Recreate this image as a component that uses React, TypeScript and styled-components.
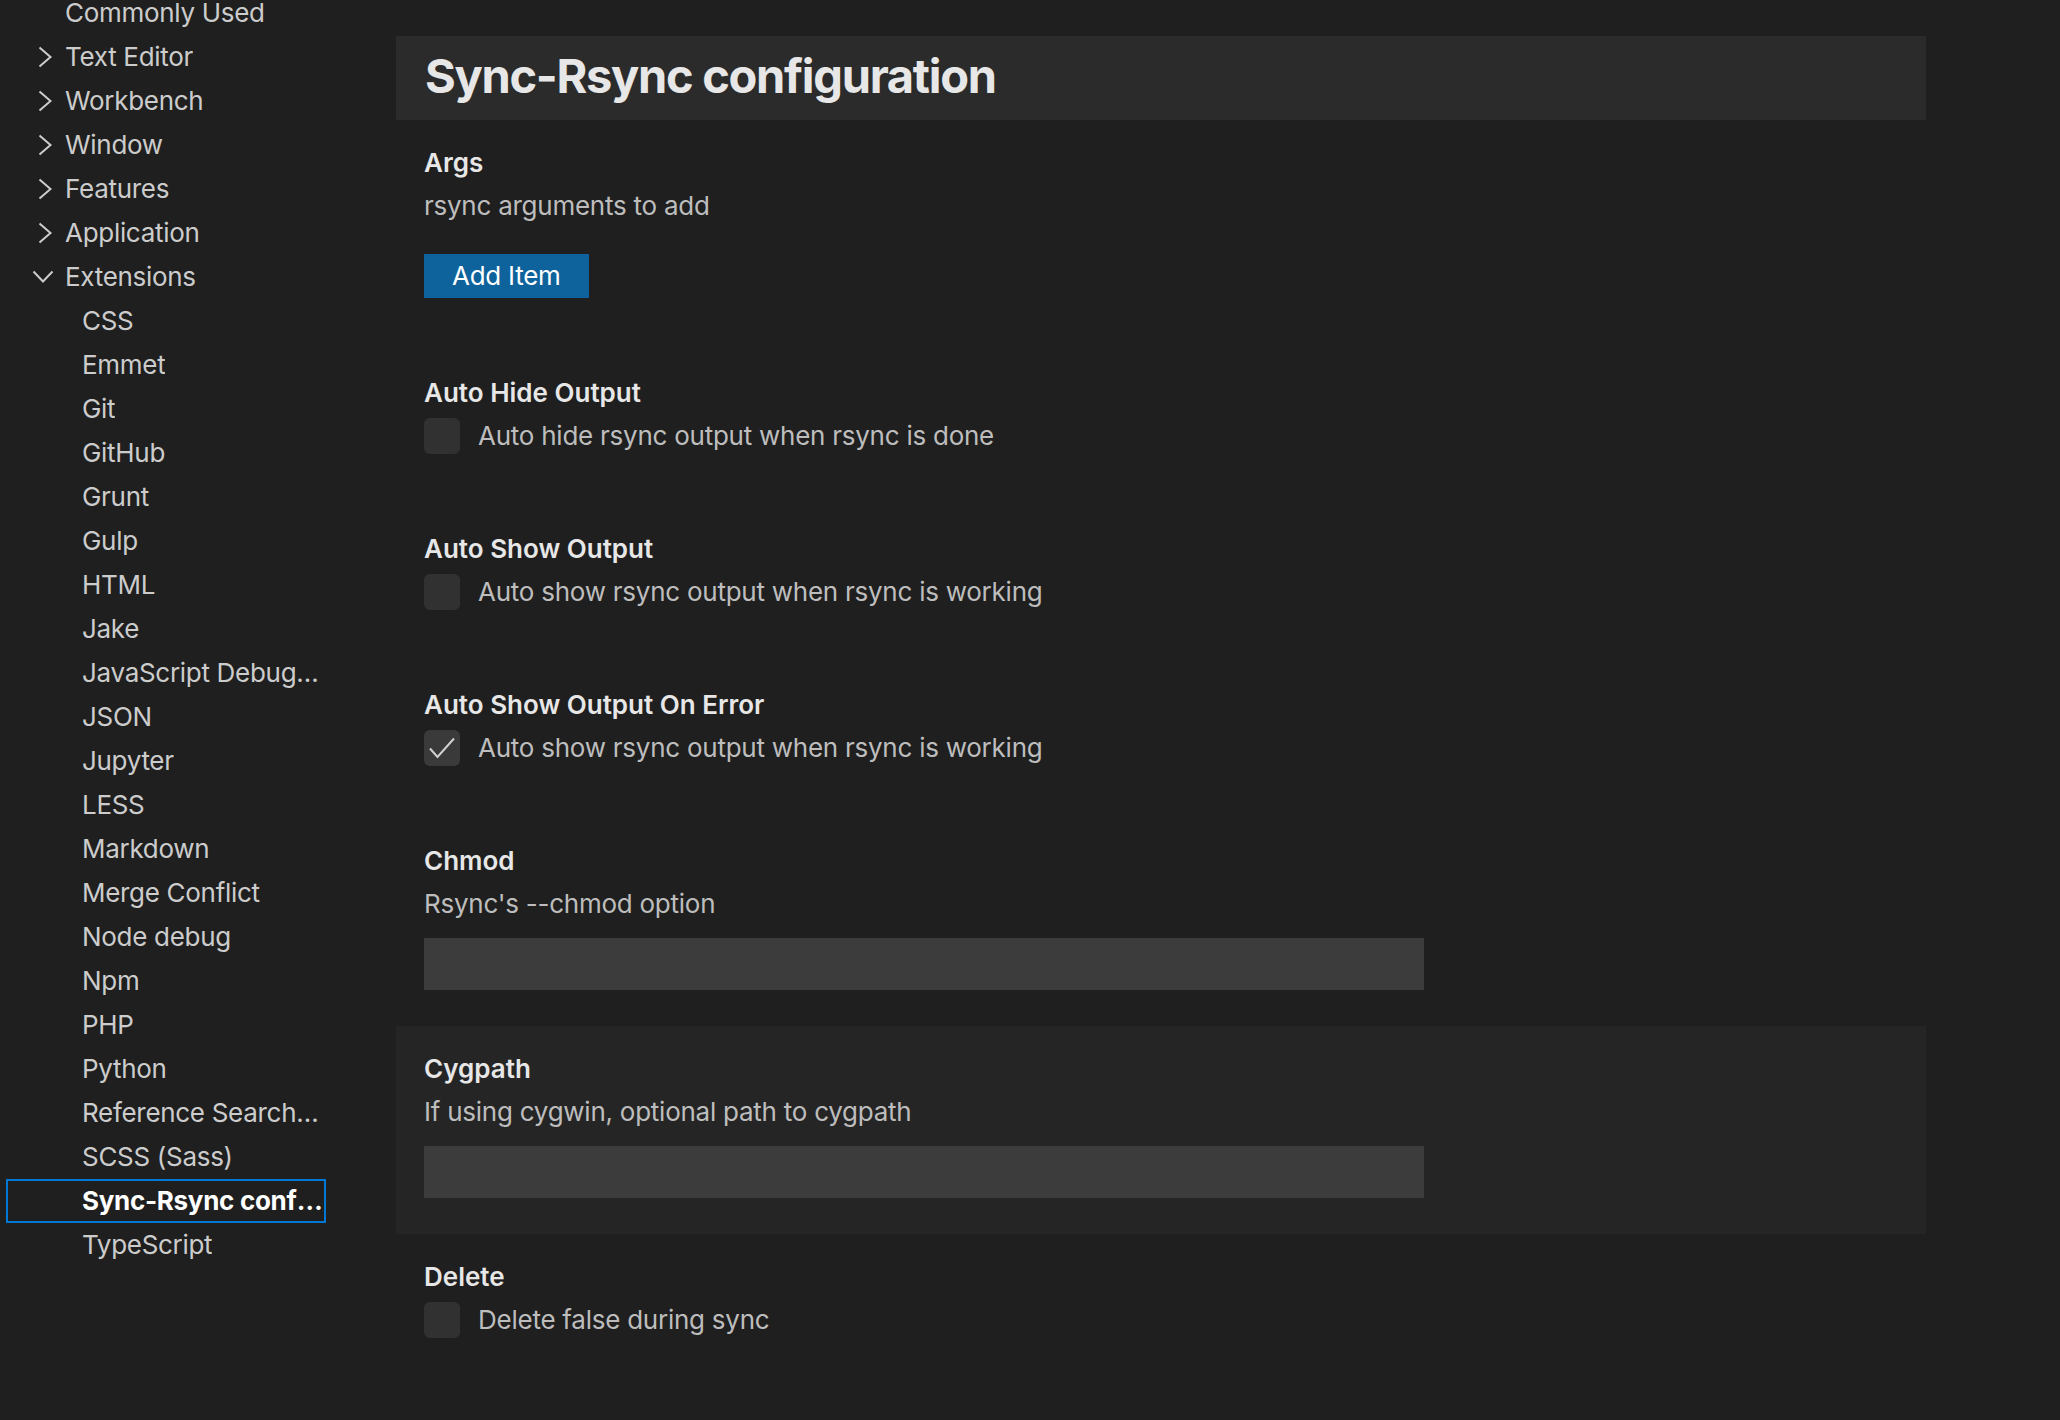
import React from "react";
import styled, { createGlobalStyle } from "styled-components";

const Global = createGlobalStyle`
  html, body { margin: 0; padding: 0; background: #1f1f1f; }
  body {
    font-family: Inter, "Noto Sans", "Liberation Sans", sans-serif;
    -webkit-font-smoothing: antialiased;
  }
  * { box-sizing: border-box; }
`;

const Page = styled.div`
  display: flex;
  width: 2060px;
  height: 1420px;
  overflow: hidden;
  background: #1f1f1f;
`;

const Sidebar = styled.nav`
  width: 396px;
  flex: none;
  display: flex;
  flex-direction: column;
  margin-top: -9px;
`;

const TreeRow = styled.div<{ $depth: number; $selected?: boolean }>`
  display: flex;
  align-items: center;
  width: 320px;
  height: 44px;
  margin-left: 6px;
  padding-left: ${(p) => p.$depth * 17 + 21}px;
  padding-right: 2px;
  font-size: 26px;
  line-height: 44px;
  letter-spacing: -0.3px;
  color: ${(p) => (p.$selected ? "#ffffff" : "#cccccc")};
  font-weight: ${(p) => (p.$selected ? 700 : 400)};
  box-shadow: ${(p) => (p.$selected ? "inset 0 0 0 2px #0078d4" : "none")};
  white-space: nowrap;
`;

const Twistie = styled.span`
  width: 32px;
  height: 32px;
  flex: none;
  margin-right: 6px;
  display: flex;
  align-items: center;
  justify-content: center;
`;

const TreeLabel = styled.span`
  overflow: hidden;
  text-overflow: ellipsis;
  min-width: 0;
`;

const Content = styled.main`
  width: 1530px;
  flex: none;
  display: flex;
  flex-direction: column;
  padding-top: 36px;
`;

const GroupHeader = styled.h1`
  margin: 0;
  height: 84px;
  background: #2b2b2b;
  padding: 0 0 0 29px;
  font-size: 47px;
  font-weight: 700;
  line-height: 80px;
  color: #e7e7e7;
  letter-spacing: -1.3px;
`;

const Row = styled.section<{ $hover?: boolean; $bottom: number }>`
  display: flex;
  flex-direction: column;
  align-items: flex-start;
  padding: 25px 28px ${(p) => p.$bottom}px 28px;
  background: ${(p) => (p.$hover ? "#252525" : "transparent")};
`;

const Title = styled.div`
  font-size: 26px;
  font-weight: 600;
  line-height: 36px;
  color: #e7e7e7;
`;

const Description = styled.div`
  margin-top: 4.5px;
  font-size: 26px;
  line-height: 40px;
  letter-spacing: -0.25px;
  color: #bdbdbd;
`;

const Button = styled.button`
  margin-top: 28.5px;
  height: 44px;
  padding: 0 28px;
  border: none;
  background: #0e639c;
  color: #ffffff;
  font-family: inherit;
  font-size: 26px;
  line-height: 44px;
  letter-spacing: -0.25px;
`;

const CheckLine = styled.label`
  margin-top: 7px;
  display: flex;
  align-items: center;
  gap: 18px;
  font-size: 26px;
  line-height: 36px;
  letter-spacing: -0.25px;
  color: #bdbdbd;
`;

const Box = styled.span<{ $checked?: boolean }>`
  width: 36px;
  height: 36px;
  border-radius: 6px;
  background: ${(p) => (p.$checked ? "#3a3a3a" : "#313131")};
  display: flex;
  align-items: center;
  justify-content: center;
  flex: none;
`;

const TextInput = styled.div`
  margin-top: 14.5px;
  width: 1000px;
  height: 52px;
  background: #3c3c3c;
`;

const ChevronRight = () => (
  <svg width="32" height="32" viewBox="0 0 32 32" fill="none">
    <polyline points="12.5,6.5 23.5,16 12.5,25.5" stroke="#cccccc" strokeWidth="2" strokeLinejoin="miter" />
  </svg>
);

const ChevronDown = () => (
  <svg width="32" height="32" viewBox="0 0 32 32" fill="none">
    <polyline points="6.5,10.5 16,20.5 25.5,10.5" stroke="#cccccc" strokeWidth="2" />
  </svg>
);

const Check = () => (
  <svg width="36" height="36" viewBox="0 0 36 36" fill="none">
    <polyline points="6,18.5 13.5,27 30,8.5" stroke="#d0d0d0" strokeWidth="2" />
  </svg>
);

type Node = { label: string; depth: number; twistie?: "right" | "down"; selected?: boolean };

const tree: Node[] = [
  { label: "Commonly Used", depth: 0 },
  { label: "Text Editor", depth: 0, twistie: "right" },
  { label: "Workbench", depth: 0, twistie: "right" },
  { label: "Window", depth: 0, twistie: "right" },
  { label: "Features", depth: 0, twistie: "right" },
  { label: "Application", depth: 0, twistie: "right" },
  { label: "Extensions", depth: 0, twistie: "down" },
  ...[
    "CSS",
    "Emmet",
    "Git",
    "GitHub",
    "Grunt",
    "Gulp",
    "HTML",
    "Jake",
    "JavaScript Debugger",
    "JSON",
    "Jupyter",
    "LESS",
    "Markdown",
    "Merge Conflict",
    "Node debug",
    "Npm",
    "PHP",
    "Python",
    "Reference Search View",
  ].map((label) => ({ label, depth: 1 })),
  { label: "SCSS (Sass)", depth: 1 },
  { label: "Sync-Rsync configuration", depth: 1, selected: true },
  { label: "TypeScript", depth: 1 },
];

export default function App() {
  return (
    <>
      <Global />
      <Page>
        <Sidebar>
          {tree.map((n) => (
            <TreeRow key={n.label} $depth={n.depth} $selected={n.selected}>
              <Twistie>
                {n.twistie === "right" && <ChevronRight />}
                {n.twistie === "down" && <ChevronDown />}
              </Twistie>
              <TreeLabel>{n.label}</TreeLabel>
            </TreeRow>
          ))}
        </Sidebar>
        <Content>
          <GroupHeader>Sync-Rsync configuration</GroupHeader>
          <Row $bottom={52}>
            <Title>Args</Title>
            <Description>rsync arguments to add</Description>
            <Button>Add Item</Button>
          </Row>
          <Row $bottom={52}>
            <Title>Auto Hide Output</Title>
            <CheckLine>
              <Box />
              Auto hide rsync output when rsync is done
            </CheckLine>
          </Row>
          <Row $bottom={52}>
            <Title>Auto Show Output</Title>
            <CheckLine>
              <Box />
              Auto show rsync output when rsync is working
            </CheckLine>
          </Row>
          <Row $bottom={52}>
            <Title>Auto Show Output On Error</Title>
            <CheckLine>
              <Box $checked>
                <Check />
              </Box>
              Auto show rsync output when rsync is working
            </CheckLine>
          </Row>
          <Row $bottom={36}>
            <Title>Chmod</Title>
            <Description>Rsync's --chmod option</Description>
            <TextInput />
          </Row>
          <Row $bottom={36} $hover>
            <Title>Cygpath</Title>
            <Description>If using cygwin, optional path to cygpath</Description>
            <TextInput />
          </Row>
          <Row $bottom={52}>
            <Title>Delete</Title>
            <CheckLine>
              <Box />
              Delete false during sync
            </CheckLine>
          </Row>
        </Content>
      </Page>
    </>
  );
}
